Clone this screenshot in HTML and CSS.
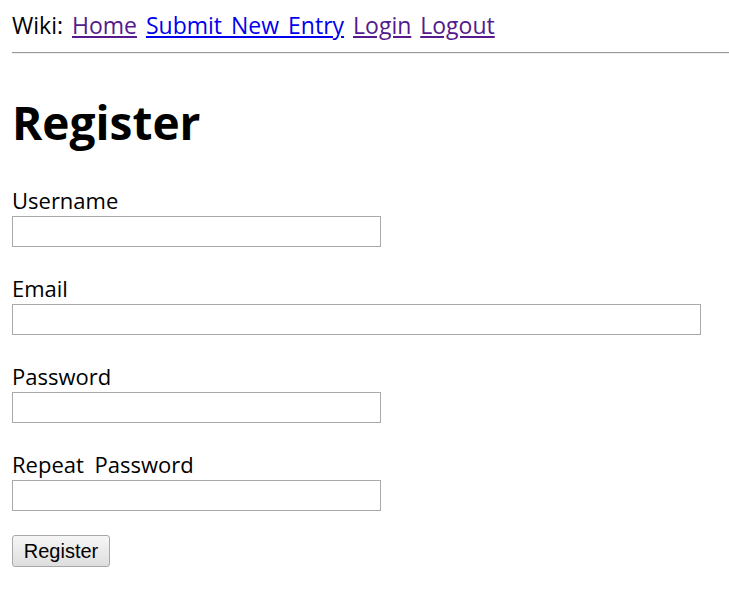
FILE: index.html
```html
<!DOCTYPE html>
<html>
<head>
<meta charset="utf-8">
<link rel="stylesheet" href="styles.css">
</head>
<body>
<nav class="nav">Wiki: <a href="#" class="visited">Home</a> <a href="#">Submit New Entry</a> <a href="#" class="visited">Login</a> <a href="#" class="visited">Logout</a></nav>
<div class="rule"></div>
<h1 class="title">Register</h1>
<form class="form">
  <div class="field">
    <label class="label">Username</label>
    <input class="input" type="text">
  </div>
  <div class="field">
    <label class="label">Email</label>
    <input class="input wide" type="text">
  </div>
  <div class="field">
    <label class="label">Password</label>
    <input class="input" type="password">
  </div>
  <div class="field">
    <label class="label">Repeat Password</label>
    <input class="input" type="password">
  </div>
  <button class="btn" type="button">Register</button>
</form>
</body>
</html>
```

FILE: styles.css
```css
html, body {
  margin: 0;
  padding: 0;
  background: #fff;
}
body {
  padding: 10px 0 0 12px;
  font-family: "Open Sans", "Noto Sans CJK KR", sans-serif;
  font-size: 22px;
  word-spacing: 5px;
  color: #000;
}
.nav {
  font-size: 23px;
  word-spacing: 3px;
  line-height: 30px;
  height: 32px;
}
.nav a {
  color: #0000ee;
}
.nav a.visited {
  color: #551a8b;
}
.rule {
  margin-top: 10px;
  height: 1px;
  background: #9a9a9a;
  border-bottom: 1px solid #eeeeee;
}
.title {
  margin: 38px 0 0 0;
  font-size: 46px;
  font-weight: 700;
  line-height: 60px;
  word-spacing: 0;
}
.form {
  margin-top: 33px;
  display: flex;
  flex-direction: column;
  align-items: flex-start;
}
.field {
  display: flex;
  flex-direction: column;
  align-items: flex-start;
  margin-bottom: 26px;
}
.label {
  line-height: 31px;
  height: 31px;
}
.input {
  box-sizing: border-box;
  width: 369px;
  height: 31px;
  margin: 0;
  border: 1px solid #a9a9a9;
  background: #fff;
  padding: 0 4px;
}
.input.wide {
  width: 689px;
}
.btn {
  margin: -2px 0 0 0;
  box-sizing: border-box;
  width: 98px;
  height: 32px;
  font-family: "Liberation Sans", Arial, sans-serif;
  font-size: 20px;
  word-spacing: 0;
  color: #000;
  border: 1px solid #a8a8a8;
  border-radius: 3px;
  background: linear-gradient(#f6f6f6, #dedede);
  padding: 0;
}
```
